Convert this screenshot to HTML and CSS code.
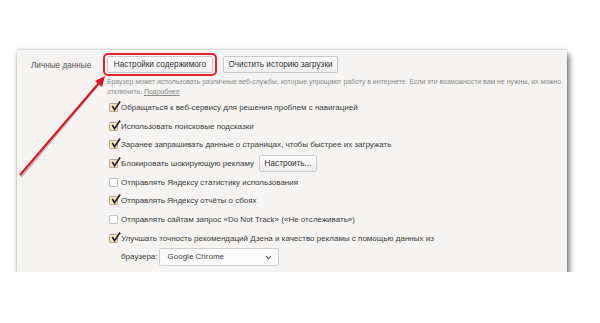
FILE: index.html
```html
<!DOCTYPE html>
<html lang="ru">
<head>
  <meta charset="UTF-8" />
  <title>Личные данные</title>
  <link rel="stylesheet" href="styles.css">
</head>
<body>

<div class="panel">
  <div class="label">Личные данные</div>

  <div class="content">
    <div class="buttons">
      <span class="highlight"><button class="btn">Настройки содержимого</button></span>
      <button class="btn">Очистить историю загрузки</button>
    </div>

    <p class="desc">
      Браузер может использовать различные веб-службы, которые упрощают работу в интернете. Если эти возможности вам не нужны, их можно<br>
      отключить. <a class="more">Подробнее</a>
    </p>

    <div class="row">
      <span class="box on"><svg viewBox="0 0 12 12"><path d="M2.5 5.5 L5 9.5 L11 0.5"/></svg></span>
      Обращаться к веб-сервису для решения проблем с навигацией
    </div>
    <div class="row">
      <span class="box on"><svg viewBox="0 0 12 12"><path d="M2.5 5.5 L5 9.5 L11 0.5"/></svg></span>
      Использовать поисковые подсказки
    </div>
    <div class="row">
      <span class="box on"><svg viewBox="0 0 12 12"><path d="M2.5 5.5 L5 9.5 L11 0.5"/></svg></span>
      Заранее запрашивать данные о страницах, чтобы быстрее их загружать
    </div>
    <div class="row">
      <span class="box on"><svg viewBox="0 0 12 12"><path d="M2.5 5.5 L5 9.5 L11 0.5"/></svg></span>
      Блокировать шокирующую рекламу
      <button class="btn small">Настроить...</button>
    </div>
    <div class="row">
      <span class="box"></span>
      Отправлять Яндексу статистику использования
    </div>
    <div class="row">
      <span class="box on"><svg viewBox="0 0 12 12"><path d="M2.5 5.5 L5 9.5 L11 0.5"/></svg></span>
      Отправлять Яндексу отчёты о сбоях
    </div>
    <div class="row">
      <span class="box"></span>
      Отправлять сайтам запрос «Do Not Track» («Не отслеживать»)
    </div>
    <div class="row">
      <span class="box on"><svg viewBox="0 0 12 12"><path d="M2.5 5.5 L5 9.5 L11 0.5"/></svg></span>
      Улучшать точность рекомендаций Дзена и качество рекламы с помощью данных из
    </div>
    <div class="row sub">
      браузера:
      <div class="select">
        Google Chrome
        <svg class="chev" viewBox="0 0 8 5"><path d="M1 1 L4 4 L7 1"/></svg>
      </div>
    </div>
  </div>
</div>

<svg class="arrow" width="600" height="323" viewBox="0 0 600 323">
  <line x1="21" y1="177" x2="99" y2="84" stroke="#9a9a9a" stroke-width="2" opacity="0.6"/>
  <line x1="20" y1="175" x2="99" y2="83" stroke="#e0141c" stroke-width="2"/>
  <polygon points="105,76 102,87 95,81" fill="#e0141c"/>
</svg>

</body>
</html>
```

FILE: styles.css
```css
body {
  margin: 0;
  background: #fff;
  font-family: "Liberation Sans", Arial, sans-serif;
  color: #444;
}

.panel {
  display: flex;
  margin: 50px 0 0 17px;
  width: 550px;
  height: 222px;
  background: #f5f4f2;
  box-shadow: 0 -1px 2px rgba(0, 0, 0, 0.15), 2px 4px 6px rgba(0, 0, 0, 0.6);
}

.label {
  flex-shrink: 0;
  width: 74px;
  padding: 11px 0 0 14px;
  font-size: 8.2px;
  color: #555;
  white-space: nowrap;
}

.content {
  flex-grow: 1;
  min-width: 0;
  padding-top: 3px;
}

.buttons {
  display: flex;
  align-items: center;
  gap: 6px;
  height: 23px;
}

.highlight {
  display: inline-flex;
  border: 2px solid #e2252b;
  border-radius: 5px;
  padding: 1px 2px;
  margin-left: -2px;
}

.btn {
  font-family: inherit;
  font-size: 8.2px;
  color: #333;
  background: linear-gradient(#fcfcfc, #f0f0f0);
  border: 1px solid #c9c9c9;
  border-radius: 2px;
  height: 17px;
  padding: 0;
  white-space: nowrap;
}

.highlight .btn {
  width: 106px;
}

.buttons > .btn {
  width: 115px;
}

.desc {
  margin: 1px 0 0 2px;
  font-size: 6.9px;
  line-height: 10px;
  color: #8a8a8a;
  height: 21px;
  white-space: nowrap;
}

.more {
  color: #8a8a8a;
  text-decoration: underline;
}

.row {
  display: flex;
  align-items: center;
  height: 18.7px;
  padding-left: 4px;
  font-size: 8px;
  color: #3c3c3c;
  white-space: nowrap;
}

.box {
  position: relative;
  width: 7px;
  height: 7px;
  margin-right: 3px;
  border: 1px solid #c2c2c2;
  border-radius: 1px;
  background: #fff;
  flex-shrink: 0;
}

.box.on {
  background: #f2e4bf;
  border-color: #b9ad93;
}

.box svg {
  position: absolute;
  left: 0;
  top: -3px;
  width: 11px;
  height: 11px;
  fill: none;
  stroke: #222;
  stroke-width: 1.8;
}

.btn.small {
  width: 58px;
  height: 17px;
  margin-left: 5px;
}

.sub {
  padding-left: 16px;
  gap: 0;
}

.select {
  position: relative;
  width: 110px;
  height: 16px;
  margin-left: 1px;
  padding-left: 8px;
  line-height: 16px;
  background: #fbfbfb;
  border: 1px solid #cfcfcf;
  border-radius: 2px;
  color: #444;
}

.chev {
  position: absolute;
  right: 6px;
  top: 6px;
  width: 7px;
  height: 5px;
  fill: none;
  stroke: #555;
  stroke-width: 1.2;
}

.arrow {
  position: absolute;
  left: 0;
  top: 0;
  pointer-events: none;
}
```
